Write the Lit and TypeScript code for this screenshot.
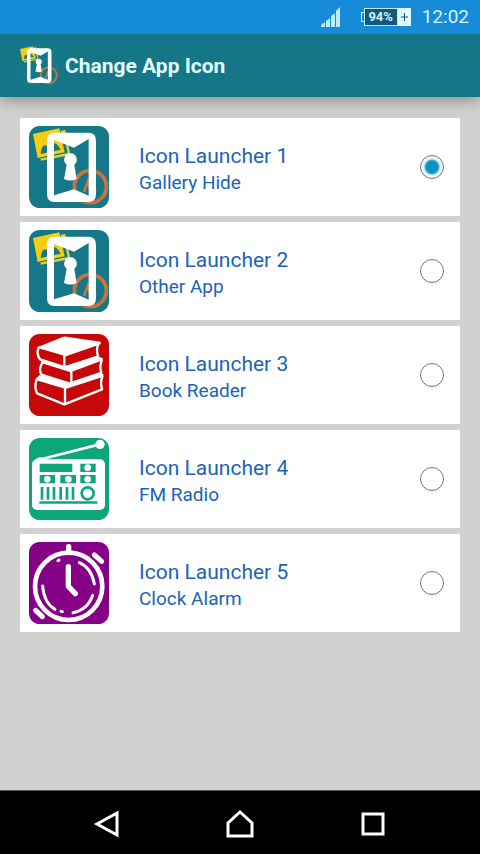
import { LitElement, html, css, svg } from "lit";
import { customElement, state } from "lit/decorators.js";

const gallery = svg`
  <rect x="43" y="42" width="240" height="246" rx="32" fill="#147889"/>
  <path d="M55 66 134 49 150 121 69 138Z" fill="#f5cd12"/>
  <path d="M78 143 163 126 149 58 139 60" fill="none" stroke="#d9d23a" stroke-width="7"/>
  <path d="M78 126C80 104 88 95 97 103C108 85 128 91 138 113Z" fill="#147889"/>
  <circle cx="227" cy="224" r="48" fill="none" stroke="#c9733f" stroke-width="11"/>
  <path d="M208 240 220 207 230 240" fill="none" stroke="#c9733f" stroke-width="8"/>
  <path d="M233 231 249 236 235 242Z" fill="#c9733f"/>
  <path fill="#fff" fill-rule="evenodd" d="M119 62H221Q244 62 244 86V246Q244 270 221 270H119Q97 270 97 246V86Q97 62 119 62ZM118 84V250L178 232 222 251V81L178 107Z"/>
  <path d="M168 124a19 19 0 0 1 11 34l7 43q-18 9-38 0l8-43a19 19 0 0 1 12-34Z" fill="#fff"/>`;

const books = svg`
  <rect x="43" y="24" width="240" height="246" rx="32" fill="#c60808"/>
  <g fill="#fff">
    <path d="M70 63 144 33Q149 31 155 32L258 47V55L154 91 72 67Z"/>
    <path d="M76 101 150 121 247 90 264 97V103L168 139 82 112Z"/>
    <path d="M74 148 165 169 255 139 266 145V152L153 189 65 163V156Z"/>
  </g>
  <g fill="none" stroke="#fff" stroke-width="7" stroke-linejoin="round" stroke-linecap="round">
    <path d="M72 65Q64 84 76 100L152 124 249 92M149 90V122M250 56Q244 74 250 90"/>
    <path d="M84 109Q71 128 80 146L169 174 259 141M170 138V170M261 103Q254 122 260 141"/>
    <path d="M66 160Q58 183 67 202L149 235 262 190M151 188V228M263 151Q256 172 262 188"/>
  </g>`;

const radio = svg`
  <rect x="43" y="24" width="240" height="246" rx="32" fill="#0ca678"/>
  <path d="M70 90 252 44" stroke="#fff" stroke-width="8"/>
  <circle cx="256" cy="43" r="14" fill="#fff"/>
  <path d="M60 90Q76 73 94 90Z" fill="#fff"/>
  <rect x="52" y="88" width="219" height="152" rx="15" fill="#fff"/>
  <g fill="#0ca678">
    <path d="M75 101H173V126H75ZM197 101H243V126H197ZM75 135H121V160H75ZM137 135H184V160H137ZM197 135H243V160H197ZM74 214H248V221H74Z"/>
    <path d="M78 171h8v38h-8zM96 171h8v38h-8zM114 171h8v38h-8zM134 171h8v38h-8zM153 171h8v38h-8zM171 171h8v38h-8z"/>
  </g>
  <g fill="#fff">
    <circle cx="219" cy="113" r="10"/><circle cx="98" cy="148" r="10"/>
    <circle cx="161" cy="148" r="10"/><circle cx="219" cy="148" r="10"/>
  </g>
  <circle cx="219" cy="190" r="18" fill="#fff" stroke="#0ca678" stroke-width="8"/>`;

const clock = svg`
  <rect x="43" y="24" width="240" height="246" rx="32" fill="#850087"/>
  <g fill="none" stroke="#fff" stroke-linecap="round">
    <circle cx="162" cy="157" r="101" stroke-width="14"/>
    <path d="M162 38V54M161 98V157L182 179" stroke-width="16" stroke-linejoin="round"/>
    <path d="M239 63 261 82M63 229 83 248" stroke-width="15"/>
    <path d="M194 86Q230 101 239 150M84 156Q88 207 121 226M175 236Q219 228 234 184M130 80 133 78M139 232 143 233" stroke-width="9"/>
  </g>`;

interface Launcher { title: string; app: string; art: unknown; box: string }

const launchers: Launcher[] = [
  { title: "Icon Launcher 1", app: "Gallery Hide", art: gallery, box: "43 42 240 246" },
  { title: "Icon Launcher 2", app: "Other App", art: gallery, box: "43 42 240 246" },
  { title: "Icon Launcher 3", app: "Book Reader", art: books, box: "43 24 240 246" },
  { title: "Icon Launcher 4", app: "FM Radio", art: radio, box: "43 24 240 246" },
  { title: "Icon Launcher 5", app: "Clock Alarm", art: clock, box: "43 24 240 246" },
];

@customElement("app-root")
export class AppRoot extends LitElement {
  @state() private selected = 0;

  static styles = css`
    :host {
      display: flex;
      flex-direction: column;
      min-height: 100vh;
      background: #d1d2d0;
      font-family: Roboto, "Liberation Sans", sans-serif;
    }
    .status {
      position: relative;
      z-index: 1;
      display: flex;
      align-items: center;
      justify-content: flex-end;
      height: 34px;
      padding-right: 11px;
      background: #168cd8;
      color: #d4f3ff;
    }
    .signal { width: 20px; height: 20px; margin-right: 20px; }
    .battery { display: flex; align-items: center; margin-right: 11px; }
    .nub { width: 2px; height: 8px; border: 1px solid #bde9f8; border-right: 0; }
    .level {
      box-sizing: border-box;
      width: 34px;
      height: 18px;
      border: 1px solid #bde9f8;
      background: #14587f;
      font-size: 13px;
      line-height: 16px;
      font-weight: 700;
      text-align: center;
    }
    .plus { width: 13px; height: 18px; background: #e0f8ff; }
    .clock { font-size: 19px; line-height: 24px; }
    .bar {
      display: flex;
      align-items: center;
      gap: 7px;
      height: 63px;
      padding: 0 18px;
      background: #147687;
      box-shadow: 0 2px 14px rgba(60, 40, 50, 0.5);
    }
    .logo { width: 40px; height: 41px; }
    h1 {
      margin: 0;
      font-size: 21px;
      line-height: 28px;
      font-weight: 700;
      color: #e4ffff;
    }
    main {
      position: relative;
      flex: 1;
      display: flex;
      flex-direction: column;
      gap: 6px;
      padding: 21px 20px;
    }
    .card {
      display: flex;
      align-items: center;
      height: 98px;
      padding: 0 16px 0 9px;
      background: #fff;
      color: #1c63b8;
    }
    .art { width: 80px; height: 82px; flex: none; }
    .text { flex: 1; margin-left: 30px; padding-top: 4px; }
    .title, .app { display: block; }
    .title { font-size: 21px; line-height: 28px; }
    .app { font-size: 19px; line-height: 26px; }
    .radio {
      appearance: none;
      width: 24px;
      height: 24px;
      margin: 0;
      border: 1px solid #757575;
      border-radius: 50%;
      background: #fff;
    }
    .radio:checked {
      background: radial-gradient(circle, #0b8fc8 0 5px, #269fca 6px, #4aaccd 7px, #d9f4fc 8px, #e8faff 11px);
    }
    nav {
      display: flex;
      justify-content: center;
      gap: 93px;
      height: 64px;
      background: #000;
      border-top: 1px solid #555;
      box-sizing: border-box;
    }
    .key {
      display: flex;
      align-items: center;
      justify-content: center;
      width: 40px;
      padding: 2px 0 0;
      border: 0;
      background: none;
    }
    .glyph { width: 30px; height: 30px; fill: none; stroke: #fff; stroke-width: 3; }
  `;

  render() {
    return html`
      <div class="status">
        <svg class="signal" viewBox="0 0 20 20" fill="#bde9f8" aria-label="Signal">
          <path d="M0 20V18L4 15V20ZM5 20V14L9 11V20ZM10 20V9L14 6V20ZM15 20V4L19 0V20Z"/>
        </svg>
        <div class="battery">
          <span class="nub"></span>
          <span class="level">94%</span>
          <svg class="plus" viewBox="0 0 13 18" aria-hidden="true">
            <path d="M3 9H10M6.500 5V13" stroke="#14587f" stroke-width="1"/>
          </svg>
        </div>
        <span class="clock">12:02</span>
      </div>
      <header class="bar">
        <svg class="logo" viewBox="43 42 240 246" aria-hidden="true">${gallery}</svg>
        <h1>Change App Icon</h1>
      </header>
      <main>
        ${launchers.map((l, i) => html`
          <label class="card">
            <svg class="art" viewBox=${l.box} preserveAspectRatio="none" aria-hidden="true">${l.art}</svg>
            <span class="text">
              <span class="title">${l.title}</span>
              <span class="app">${l.app}</span>
            </span>
            <input class="radio" type="radio" name="launcher"
              .checked=${this.selected === i} @change=${() => (this.selected = i)}>
          </label>`)}
      </main>
      <nav>
        <button class="key" aria-label="Back">
          <svg class="glyph" viewBox="0 0 30 30"><path d="M25 4V26L5 15Z"/></svg>
        </button>
        <button class="key" aria-label="Home">
          <svg class="glyph" viewBox="0 0 30 30"><path d="M15 3 27 14V27H3V14Z"/></svg>
        </button>
        <button class="key" aria-label="Recent apps">
          <svg class="glyph" viewBox="0 0 30 30"><path d="M5 5H25V25H5Z"/></svg>
        </button>
      </nav>`;
  }
}
